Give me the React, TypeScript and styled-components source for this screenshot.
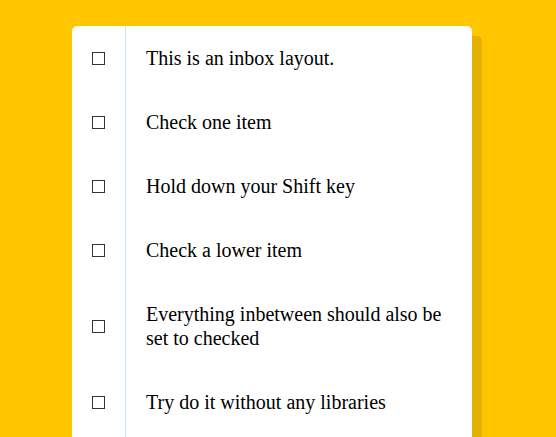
import { FC } from "react";
import styled, { createGlobalStyle } from "styled-components";

const items: string[] = [
  "This is an inbox layout.",
  "Check one item",
  "Hold down your Shift key",
  "Check a lower item",
  "Everything inbetween should also be set to checked",
  "Try do it without any libraries",
  "Just regular JavaScript",
  "Good Luck!",
  "Don't forget to tweet your result!",
];

const App: FC = (): JSX.Element => {
  return (
    <>
      <GlobalStyle />
      <Inbox>
        {items.map((text) => (
          <Item key={text}>
            <Checkbox type="checkbox" />
            <Label>{text}</Label>
          </Item>
        ))}
      </Inbox>
    </>
  );
};

export default App;

const GlobalStyle = createGlobalStyle`
  html {
    background: #ffc600;
    font-family: "Liberation Serif", "Times New Roman", serif;
  }
  body {
    margin: 0;
    padding: 26px 0 0 72px;
  }
`;

const Inbox = styled.div`
  width: 400px;
  background: white;
  border-radius: 5px;
  box-shadow: 10px 10px 0 rgba(0, 0, 0, 0.1);
`;

const Item = styled.div`
  display: flex;
  align-items: center;
`;

const Checkbox = styled.input`
  appearance: none;
  box-sizing: border-box;
  width: 13px;
  height: 13px;
  margin: 20px;
  border: 1px solid #333;
  border-radius: 0;
  background: #fff;

  &:checked {
    background: #333;
  }
`;

const Label = styled.p`
  flex: 1;
  margin: 0;
  padding: 20px;
  font-family: "Liberation Serif", "Times New Roman", serif;
  font-size: 20px;
  line-height: 24px;
  font-weight: 200;
  color: #000;
  border-left: 1px solid #d1e2ff;

  input:checked + & {
    background: #f9f9f9;
    text-decoration: line-through;
  }
`;
